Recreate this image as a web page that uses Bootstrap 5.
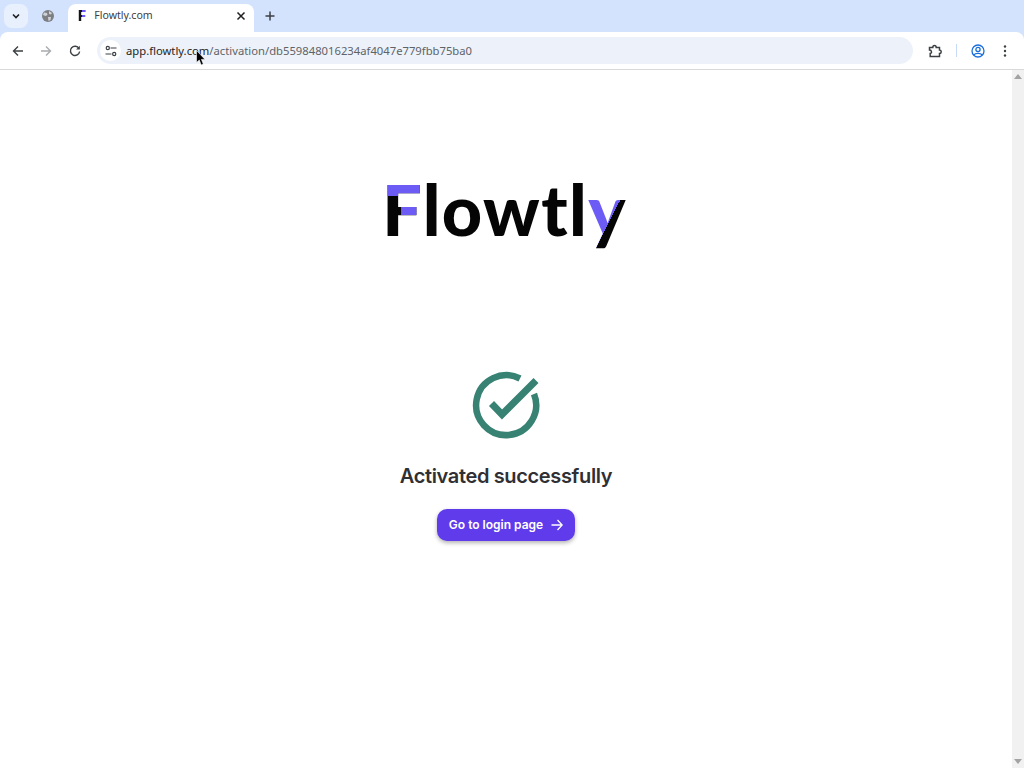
<!DOCTYPE html>
<html lang="en">
  <head>
    <meta charset="UTF-8" />
    <meta name="viewport" content="width=device-width, initial-scale=1.0" />
    <title>Flowtly.com</title>
    <link
      href="https://cdn.jsdelivr.net/npm/bootstrap@5.3.2/dist/css/bootstrap.min.css"
      rel="stylesheet"
    />
    <style>
      html, body {
        height: 768px;
        overflow: hidden;
      }
      body {
        background: #fff;
        font-family: "Noto Sans", sans-serif;
      }
      .tab-strip {
        height: 32px;
        background: #d3e3fd;
        padding-left: 4px;
      }
      .tab-search {
        width: 24px;
        height: 24px;
        margin-top: 4px;
        border-radius: 8px;
        background: #e9f0fd;
      }
      .tab-idle {
        width: 40px;
        height: 24px;
        margin-top: 4px;
      }
      .tab-active {
        width: 186px;
        height: 28px;
        margin-top: 4px;
        padding: 0 8px 4px 10px;
        background: #fff;
        border-radius: 8px 8px 0 0;
        color: #3c4043;
        font-size: 10.6px;
      }
      .tab-title {
        margin-left: 8px;
      }
      .tab-fav {
        font-family: "Inter", sans-serif;
        font-weight: 800;
        font-size: 14px;
        line-height: 1;
        background: linear-gradient(90deg, #141414 45%, #6c5cf5 45%);
        -webkit-background-clip: text;
        background-clip: text;
        -webkit-text-fill-color: transparent;
      }
      .tab-new {
        width: 32px;
        height: 24px;
        margin-top: 4px;
      }
      .tool-bar {
        height: 38px;
        padding-left: 3.5px;
        background: #fff;
        border-radius: 8px 8px 0 0;
        border-bottom: 1px solid #d9d9d9;
      }
      .strip-wrap {
        background: #d3e3fd;
      }
      .tool-btn {
        width: 28.5px;
        height: 24px;
      }
      .url-bar {
        width: 816px;
        height: 27px;
        margin-left: 8px;
        padding-left: 3px;
        border-radius: 14px;
        background: #edf2fa;
        font-size: 11.25px;
        color: #5f6368;
      }
      .url-text {
        padding-top: 1px;
      }
      .url-host {
        color: #1f1f1f;
      }
      .site-chip {
        width: 21px;
        height: 21px;
        margin-right: 5px;
        border-radius: 50%;
        background: #fff;
      }
      .tool-sep {
        width: 1px;
        height: 13px;
        background: #c7dbf8;
        margin: 0 14px 0 6px;
      }
      .dots-btn {
        margin-left: 6px;
      }
      .page-wrap {
        height: 698px;
      }
      .page-main {
        width: 1012px;
      }
      .scroll-track {
        width: 12px;
        background: #f1f1f1;
        padding-top: 4px;
        padding-bottom: 4px;
      }
      .logo-word {
        margin-top: 94px;
        margin-right: 3px;
        height: 91px;
        font-family: "Lato", sans-serif;
        font-weight: 900;
        font-size: 70px;
        line-height: 91px;
        letter-spacing: 1.4px;
        color: #050505;
      }
      .logo-f {
        background-image:
          linear-gradient(#6c5cf5, #6c5cf5),
          linear-gradient(#6c5cf5, #6c5cf5),
          linear-gradient(#050505, #050505);
        background-size: 100% 29px, calc(100% - 19px) 9px, 100% 100%;
        background-position: 0 0, right 0 top 39px, 0 0;
        background-repeat: no-repeat;
        -webkit-background-clip: text;
        background-clip: text;
        -webkit-text-fill-color: transparent;
      }
      .logo-y {
        background-image: linear-gradient(117deg, #6c5cf5 60%, #050505 60%);
        -webkit-background-clip: text;
        background-clip: text;
        -webkit-text-fill-color: transparent;
      }
      .done-mark {
        width: 68px;
        height: 68px;
        margin-top: 116px;
      }
      .done-title {
        margin: 22px 0 0;
        font-family: "Inter", sans-serif;
        font-size: 20px;
        line-height: 30px;
        letter-spacing: -0.35px;
        font-weight: 600;
        color: #303034;
      }
      .login-btn {
        margin-top: 18px;
        height: 32px;
        width: 138px;
        padding: 0;
        border: 0;
        border-radius: 10px;
        background: #5f3bec;
        color: #fff;
        font-family: "Inter", sans-serif;
        font-size: 12px;
        font-weight: 600;
        box-shadow: 0 2px 4px rgba(0, 0, 0, 0.3);
      }
      .login-btn:hover {
        background: #5f3bec;
        color: #fff;
      }
      .mouse-ptr {
        position: absolute;
        left: 196px;
        top: 50px;
      }
    </style>
  </head>
  <body>
    <div class="strip-wrap">
      <div class="tab-strip d-flex align-items-start">
        <div class="tab-search d-flex align-items-center justify-content-center">
          <svg width="10" height="10" viewBox="0 0 10 10"><path d="M2 3.500 5 6.500 8 3.500" fill="none" stroke="#1f1f1f" stroke-width="1.600"/></svg>
        </div>
        <div class="tab-idle d-flex align-items-center justify-content-center">
          <svg width="12" height="12" viewBox="0 0 12 12"><circle cx="6" cy="6" r="6" fill="#7d7f83"/><path d="M2 2.500 5 3 5.500 5 3.500 6 1 5ZM7 1 10 3 9 4.500 7 4ZM6 7 9 7 8.500 10 6.500 11Z" fill="#cfd2d8"/></svg>
        </div>
        <div class="tab-active d-flex align-items-center">
          <span class="tab-fav">F</span>
          <span class="tab-title flex-grow-1">Flowtly.com</span>
          <svg width="10" height="10" viewBox="0 0 10 10"><path d="M1.500 1.500 8.500 8.500M8.500 1.500 1.500 8.500" stroke="#1f1f1f" stroke-width="1.500"/></svg>
        </div>
        <div class="tab-new d-flex align-items-center justify-content-center">
          <svg width="10" height="10" viewBox="0 0 10 10"><path d="M5 0.500V9.500M0.500 5H9.500" stroke="#3c4043" stroke-width="1.500"/></svg>
        </div>
      </div>
      <div class="tool-bar d-flex align-items-center">
        <div class="tool-btn d-flex align-items-center justify-content-center">
          <svg width="12" height="12" viewBox="0 0 12 12"><path d="M11 6H1.500M6 1.500 1.500 6 6 10.500" fill="none" stroke="#3c4043" stroke-width="1.400"/></svg>
        </div>
        <div class="tool-btn d-flex align-items-center justify-content-center">
          <svg width="12" height="12" viewBox="0 0 12 12"><path d="M1 6H10.500M6 1.500 10.500 6 6 10.500" fill="none" stroke="#a9acb0" stroke-width="1.400"/></svg>
        </div>
        <div class="tool-btn d-flex align-items-center justify-content-center">
          <svg width="12" height="12" viewBox="0 0 12 12"><path d="M10 3.500A4.600 4.600 0 1 0 10.600 6.500" fill="none" stroke="#3c4043" stroke-width="1.400"/><path d="M10.800 0.800V4.500H7.100Z" fill="#3c4043"/></svg>
        </div>
        <div class="url-bar d-flex align-items-center">
          <div class="site-chip d-flex align-items-center justify-content-center">
            <svg width="12" height="12" viewBox="0 0 12 12" fill="none" stroke="#3c4043" stroke-width="1.200"><circle cx="2.800" cy="3" r="1.600"/><path d="M5.500 3H11.500M0.500 9H6.500"/><circle cx="9.200" cy="9" r="1.600"/></svg>
          </div>
          <span class="url-text"><span class="url-host">app.flowtly.com</span>/activation/db559848016234af4047e779fbb75ba0</span>
        </div>
        <div class="tool-btn d-flex align-items-center justify-content-center ms-2">
          <svg width="14" height="14" viewBox="0 0 14 14"><path d="M1.500 3.500H4.800C4.800 0.800 8.200 0.800 8.200 3.500H11.500V6C13.800 6 13.800 9.500 11.500 9.500V12.500H2.200V9.500C4 9.500 4 6 1.500 6Z" fill="none" stroke="#3c4043" stroke-width="1.500"/></svg>
        </div>
        <div class="tool-sep"></div>
        <div class="d-flex align-items-center justify-content-center">
          <svg width="14" height="14" viewBox="0 0 14 14" fill="none" stroke="#1a6fdc" stroke-width="1.300"><circle cx="7" cy="7" r="6"/><circle cx="7" cy="5.500" r="2.100"/><path d="M2.800 11C4.500 8.800 9.500 8.800 11.200 11"/></svg>
        </div>
        <div class="tool-btn dots-btn d-flex align-items-center justify-content-center">
          <svg width="4" height="12" viewBox="0 0 4 12" fill="#3c4043"><circle cx="2" cy="1.500" r="1.200"/><circle cx="2" cy="6" r="1.200"/><circle cx="2" cy="10.500" r="1.200"/></svg>
        </div>
      </div>
    </div>

    <div class="page-wrap d-flex">
      <main class="page-main d-flex flex-column align-items-center">
        <div class="logo-word"><span class="logo-f">F</span>lowtl<span class="logo-y">y</span></div>
        <svg class="done-mark" viewBox="0 0 68 68" fill="none" stroke="#378273">
          <path d="M48 7.500A30 30 0 1 0 62 23" stroke-width="6.500"/>
          <path d="M19.500 32.500 30 43.500 64 9.500" stroke-width="7"/>
        </svg>
        <h1 class="done-title">Activated successfully</h1>
        <button type="button" class="btn login-btn d-flex align-items-center justify-content-center gap-2">
          Go to login page
          <svg width="12" height="12" viewBox="0 0 12 12"><path d="M0.500 6H11M6.500 1 11.200 6 6.500 11" fill="none" stroke="#fff" stroke-width="1.300"/></svg>
        </button>
      </main>
      <div class="scroll-track d-flex flex-column justify-content-between align-items-center">
        <svg width="8" height="5" viewBox="0 0 8 5"><path d="M0 5 4 0 8 5Z" fill="#a3a3a3"/></svg>
        <svg width="8" height="5" viewBox="0 0 8 5"><path d="M0 0 4 5 8 0Z" fill="#a3a3a3"/></svg>
      </div>
    </div>

    <svg class="mouse-ptr" width="10" height="16" viewBox="0 0 10 16"><path d="M0.500 0.500V12.500L3.300 10 5.200 15 7.300 14 5.400 9.400H9Z" fill="#000" stroke="#fff" stroke-width="0.600"/></svg>

    <script src="https://cdn.jsdelivr.net/npm/bootstrap@5.3.2/dist/js/bootstrap.bundle.min.js"></script>
  </body>
</html>
